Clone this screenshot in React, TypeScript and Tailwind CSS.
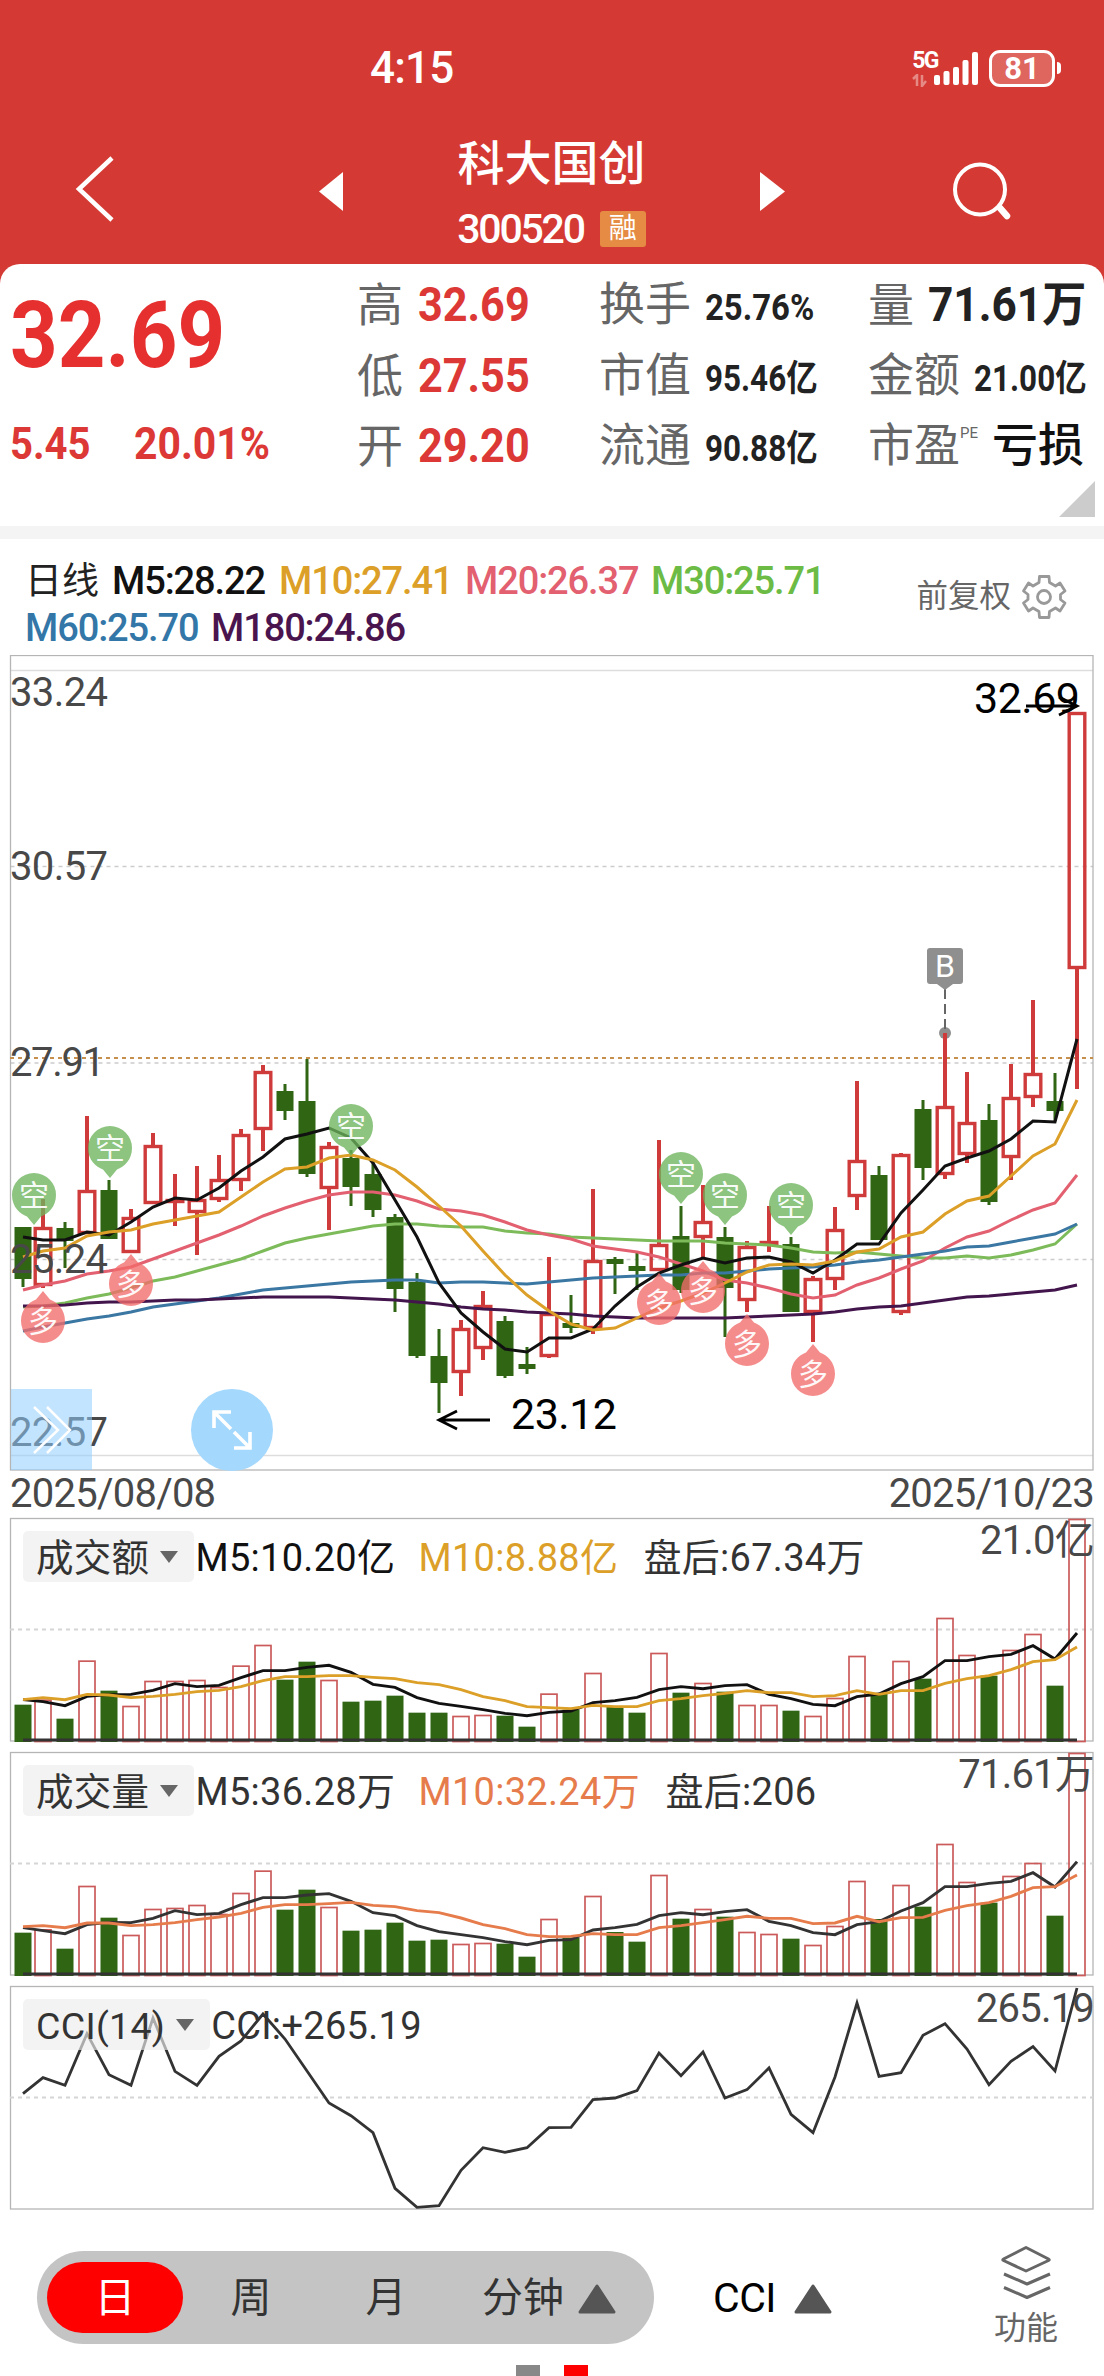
import type { ReactNode } from 'react'

type Candle = [high: number, top: number, bottom: number, low: number, up: 0 | 1]

const RED = '#cf3b3b'
const GREEN = '#2f6513'

// Candle geometry in chart units: high, body top, body bottom, low, rising
const candles: Candle[] = [
  [1227, 1227, 1279, 1287, 0], [1199, 1227, 1286, 1288, 1], [1222, 1228, 1241, 1268, 0],
  [1116, 1190, 1234, 1234, 1], [1180, 1190, 1239, 1239, 0], [1209, 1217, 1253, 1253, 1],
  [1133, 1145, 1204, 1204, 1], [1174, 1199, 1203, 1226, 1], [1166, 1199, 1213, 1255, 1],
  [1155, 1179, 1200, 1202, 1], [1129, 1134, 1181, 1191, 1], [1065, 1071, 1130, 1151, 1],
  [1084, 1091, 1111, 1120, 0], [1059, 1101, 1174, 1177, 0], [1142, 1146, 1189, 1230, 1],
  [1150, 1158, 1187, 1206, 0], [1160, 1174, 1210, 1217, 0], [1214, 1217, 1289, 1312, 0],
  [1273, 1282, 1356, 1358, 0], [1329, 1356, 1383, 1413, 0], [1320, 1328, 1373, 1396, 1],
  [1291, 1305, 1349, 1360, 1], [1316, 1321, 1376, 1378, 0], [1347, 1364, 1369, 1374, 0],
  [1257, 1313, 1357, 1358, 1], [1295, 1323, 1328, 1333, 0], [1189, 1260, 1329, 1334, 1],
  [1257, 1259, 1264, 1294, 0], [1251, 1266, 1271, 1290, 0], [1140, 1244, 1271, 1271, 1],
  [1206, 1236, 1290, 1293, 0], [1185, 1221, 1238, 1258, 1], [1227, 1237, 1288, 1337, 0],
  [1241, 1246, 1301, 1312, 1], [1206, 1241, 1245, 1252, 1], [1237, 1244, 1312, 1312, 0],
  [1276, 1278, 1313, 1342, 1], [1207, 1229, 1280, 1290, 1], [1081, 1160, 1197, 1210, 1],
  [1166, 1175, 1240, 1240, 0], [1153, 1154, 1313, 1315, 1], [1100, 1109, 1168, 1180, 0],
  [1033, 1106, 1175, 1179, 1], [1072, 1122, 1155, 1163, 1], [1104, 1120, 1202, 1205, 0],
  [1064, 1097, 1158, 1180, 1], [1000, 1073, 1098, 1107, 1], [1073, 1101, 1111, 1121, 0],
  [712, 712, 969, 1089, 1],
]

const averages = [
  { color: '#7dbb5a', data: [1307, 1306, 1303, 1298, 1294, 1288, 1281, 1277, 1271, 1265, 1259, 1251, 1243, 1238, 1234, 1230, 1226, 1224, 1224, 1226, 1227, 1227, 1231, 1233, 1234, 1237, 1238, 1239, 1240, 1241, 1241, 1241, 1243, 1244, 1245, 1248, 1252, 1253, 1252, 1254, 1256, 1258, 1258, 1256, 1258, 1255, 1250, 1244, 1224] },
  { color: '#e2606f', data: [1290, 1285, 1281, 1274, 1271, 1267, 1259, 1251, 1243, 1235, 1226, 1216, 1208, 1201, 1195, 1192, 1192, 1195, 1201, 1209, 1211, 1215, 1222, 1230, 1235, 1239, 1246, 1249, 1252, 1257, 1264, 1271, 1280, 1283, 1288, 1294, 1298, 1295, 1285, 1278, 1269, 1261, 1248, 1237, 1231, 1220, 1210, 1203, 1175] },
  { color: '#3b77a3', data: [1331, 1327, 1323, 1319, 1316, 1312, 1307, 1304, 1301, 1298, 1294, 1290, 1288, 1286, 1284, 1282, 1281, 1280, 1280, 1283, 1282, 1282, 1283, 1284, 1282, 1280, 1278, 1277, 1276, 1275, 1275, 1273, 1273, 1271, 1269, 1268, 1267, 1265, 1262, 1260, 1257, 1254, 1251, 1247, 1246, 1242, 1238, 1234, 1224] },
  { color: '#43154d', data: [1306, 1306, 1305, 1303, 1302, 1302, 1301, 1300, 1300, 1299, 1298, 1297, 1297, 1297, 1297, 1298, 1299, 1300, 1302, 1304, 1307, 1309, 1310, 1312, 1313, 1314, 1316, 1317, 1318, 1318, 1318, 1318, 1318, 1317, 1316, 1315, 1314, 1312, 1309, 1307, 1306, 1303, 1300, 1297, 1296, 1294, 1292, 1290, 1285] },
  { color: '#111111', data: [1237, 1240, 1240, 1232, 1235, 1222, 1207, 1198, 1200, 1188, 1171, 1157, 1139, 1134, 1128, 1138, 1163, 1200, 1237, 1283, 1313, 1332, 1349, 1352, 1338, 1338, 1329, 1306, 1287, 1273, 1265, 1258, 1263, 1258, 1257, 1262, 1273, 1260, 1244, 1244, 1213, 1190, 1166, 1158, 1151, 1139, 1121, 1122, 1039] },
  { color: '#dc9f27', data: [1257, 1251, 1248, 1236, 1232, 1230, 1224, 1220, 1216, 1212, 1197, 1182, 1169, 1167, 1158, 1155, 1160, 1170, 1187, 1206, 1226, 1251, 1275, 1295, 1311, 1324, 1330, 1328, 1318, 1308, 1301, 1293, 1283, 1272, 1265, 1264, 1265, 1261, 1252, 1249, 1237, 1232, 1214, 1201, 1196, 1176, 1156, 1144, 1100] },
]

const turnover = {
  bars: [109, 124, 67, 241, 151, 105, 180, 180, 183, 162, 226, 288, 184, 238, 183, 118, 121, 136, 85, 85, 75, 78, 76, 43, 142, 94, 204, 104, 85, 264, 145, 174, 148, 108, 108, 91, 75, 129, 255, 141, 240, 187, 369, 258, 196, 273, 321, 166, 666],
  m5: [124, 118, 106, 134, 139, 140, 152, 172, 163, 167, 190, 211, 211, 221, 227, 206, 170, 161, 130, 113, 104, 94, 83, 76, 86, 90, 115, 121, 131, 154, 163, 157, 166, 169, 140, 127, 110, 106, 133, 141, 172, 193, 241, 241, 253, 260, 286, 246, 324],
  m10: [124, 130, 124, 140, 138, 130, 134, 140, 148, 152, 163, 181, 193, 193, 196, 196, 191, 187, 175, 169, 154, 133, 121, 103, 100, 97, 107, 103, 103, 121, 127, 136, 143, 151, 145, 145, 133, 136, 151, 140, 151, 151, 173, 187, 196, 214, 238, 244, 282],
}

const volume = {
  bars: [127, 137, 79, 267, 172, 120, 198, 201, 210, 183, 246, 313, 196, 256, 204, 133, 136, 157, 103, 106, 93, 96, 94, 55, 168, 112, 237, 129, 100, 300, 169, 198, 175, 129, 123, 109, 90, 147, 282, 168, 270, 205, 393, 279, 217, 297, 336, 178, 666],
  m5: [142, 133, 124, 151, 158, 157, 170, 193, 181, 185, 211, 232, 232, 240, 244, 221, 187, 178, 148, 130, 121, 112, 100, 91, 104, 106, 135, 142, 152, 178, 187, 181, 190, 196, 161, 148, 127, 121, 151, 160, 192, 217, 265, 265, 275, 281, 307, 264, 340],
  m10: [145, 148, 142, 156, 156, 148, 151, 157, 166, 174, 185, 203, 211, 211, 214, 218, 209, 205, 193, 187, 171, 151, 139, 121, 115, 116, 124, 121, 121, 142, 148, 157, 166, 176, 170, 170, 154, 156, 176, 160, 172, 173, 194, 208, 217, 236, 262, 265, 300],
}

const cci = [346, 394, 371, 526, 403, 371, 573, 413, 371, 458, 504, 585, 510, 414, 318, 280, 229, 62, 5, 10, 116, 184, 170, 184, 244, 245, 328, 333, 355, 468, 400, 471, 333, 358, 423, 284, 229, 396, 618, 398, 409, 521, 556, 480, 373, 443, 487, 414, 663]

const shortPins = [[34, 1195], [110, 1148], [351, 1126], [681, 1174], [725, 1195], [791, 1205]]
const longPins = [[43, 1321], [131, 1284], [659, 1303], [703, 1291], [747, 1344], [813, 1374]]

const xAt = (i: number) => (i === 0 ? 23 : 21 + i * 22)
const toPoints = (ys: number[]) => ys.map((y, i) => `${xAt(i)},${y}`).join(' ')
const scaled = (values: number[]) => values.map((v) => 223 - v / 3)

function StatusBar() {
  return (
    <div className="flex h-[136px] items-center justify-between pl-[370px] pr-[43px]">
      <span className="text-[44px] font-medium leading-none tracking-[-0.800px]">4:15</span>
      <div className="flex items-end">
        <div className="flex h-9 flex-col">
          <span className="text-[23px] font-bold leading-[20px] tracking-[-1.500px]">5G</span>
          <svg width="15" height="13" viewBox="0 0 15 13" className="mt-[3px]" stroke="#e58a85" strokeWidth="2.5" fill="none">
            <path d="M1 5l4-4v11M10 1v11l4-5" />
          </svg>
        </div>
        <svg width="48" height="36" viewBox="0 0 48 36" className="-ml-[7px]" fill="#fff">
          <rect x="3" y="24" width="6" height="10" rx="2" />
          <rect x="12.500" y="20" width="6" height="14" rx="2" />
          <rect x="22" y="16" width="6" height="18" rx="2" />
          <rect x="31.500" y="9" width="6" height="25" rx="2" />
          <rect x="41" y="1" width="6" height="33" rx="2" />
        </svg>
        <div className="ml-[10px] flex items-center gap-[2px]">
          <div className="flex h-[37px] w-[66px] items-center justify-center rounded-[11px] border-[3px] border-white bg-[#de665f] text-[31px] font-bold leading-none">
            81
          </div>
          <div className="h-[12px] w-[4px] rounded-r-full bg-white" />
        </div>
      </div>
    </div>
  )
}

function Header() {
  return (
    <header className="h-[284px] bg-[#d43a33] text-white">
      <StatusBar />
      <div className="flex pl-[75px]">
        <svg width="40" height="68" viewBox="0 0 40 68" className="mt-[19px]" fill="none" stroke="#fff" strokeWidth="4.500">
          <path d="M37 3L4 34l33 31" />
        </svg>
        <div className="ml-[204px] flex">
          <svg width="24" height="40" viewBox="0 0 24 40" className="mt-[36px]" fill="#fff">
            <path d="M24 0v39L0 19.500z" />
          </svg>
          <div className="flex w-[417px] flex-col items-center">
            <h1 className="mt-[1px] text-[47px] font-medium leading-[54px]">科大国创</h1>
            <div className="mt-[16px] flex items-center gap-[16px]">
              <span className="text-[41px] font-medium leading-[44px] tracking-[-2.200px]">300520</span>
              <span className="flex h-[36px] w-[46px] items-center justify-center rounded-[3px] bg-[#e58b43] text-[28px] leading-none">
                融
              </span>
            </div>
          </div>
          <svg width="25" height="40" viewBox="0 0 25 40" className="mt-[36px]" fill="#fff">
            <path d="M0 0v39l25-19.500z" />
          </svg>
        </div>
        <svg width="60" height="60" viewBox="0 0 60 60" className="ml-[167px] mt-[26px]" fill="none" stroke="#fff">
          <circle cx="28" cy="27.500" r="25" strokeWidth="4" />
          <path d="M48 46l7 8" strokeWidth="6.500" strokeLinecap="round" />
        </svg>
      </div>
    </header>
  )
}

function Stat({ label, children }: { label: ReactNode; children: ReactNode }) {
  return (
    <div className="flex h-[70.500px] items-baseline">
      <span className="text-[46px] leading-[70px] text-[#666]">{label}</span>
      {children}
    </div>
  )
}

function QuotePanel() {
  const price = 'ml-[15px] inline-block origin-left scale-x-[0.900] text-[48px] font-bold text-[#dc3836]'
  const small = 'ml-[14px] inline-block origin-left scale-x-[0.860] text-[36.500px] font-bold text-[#222]'
  return (
    <section className="relative -mt-5 flex h-[262px] rounded-t-[20px] bg-white pt-[5px]">
      <div className="w-[357px] pl-[10px]">
        <div className="mt-[20px] origin-left scale-x-[0.895] text-[93px] font-bold leading-[93px] text-[#e63030]">32.69</div>
        <div className="mt-[39px] flex text-[44px] font-bold leading-[46px] text-[#dc3836]">
          <span className="w-[124px] origin-left scale-x-[0.910]">5.45</span>
          <span className="origin-left scale-x-[0.930]">20.01%</span>
        </div>
      </div>
      <div className="w-[242px]">
        <Stat label="高"><span className={price}>32.69</span></Stat>
        <Stat label="低"><span className={price}>27.55</span></Stat>
        <Stat label="开"><span className={price}>29.20</span></Stat>
      </div>
      <div className="w-[269px]">
        <Stat label="换手"><span className="ml-[14px] inline-block origin-left scale-x-[0.900] text-[36.500px] font-bold text-[#222]">25.76%</span></Stat>
        <Stat label="市值"><span className={small}>95.46亿</span></Stat>
        <Stat label="流通"><span className={small}>90.88亿</span></Stat>
      </div>
      <div className="w-[236px] whitespace-nowrap">
        <Stat label="量"><span className="ml-[14px] inline-block origin-left scale-x-[0.920] text-[48px] font-bold text-[#222]">71.61万</span></Stat>
        <Stat label="金额"><span className={small}>21.00亿</span></Stat>
        <Stat label={<>市盈<sup className="-top-[23px] text-[15px]">PE</sup></>}>
          <span className="ml-[14px] text-[46px] font-medium text-[#111]">亏损</span>
        </Stat>
      </div>
      <svg width="36" height="36" viewBox="0 0 36 36" className="absolute bottom-[9px] right-[9px]" fill="#ccc">
        <path d="M36 0v36H0z" />
      </svg>
    </section>
  )
}

function GearIcon() {
  return (
    <svg width="46" height="46" viewBox="0 0 46 46" fill="none" stroke="#999" strokeWidth="2.800" strokeLinejoin="round">
      <path d="M18.500 2.500H28L28.500 8.500 34.500 12 39 9 44 17 39.500 20.500V25.500L44 29 39 37 34.500 34 28.500 37.500 28 43.500H18.500L18 37.500 12 34 7.500 37 2.500 29 7 25.500V20.500L2.500 17 7.500 9 12 12 18 8.500z" />
      <circle cx="23" cy="23" r="6.500" />
    </svg>
  )
}

function AverageLegend() {
  return (
    <div className="flex h-[116px] justify-between pl-[25px] pr-[37px] pt-[19px]">
      <div className="text-[38px] font-medium leading-[47px] tracking-[-1.100px]">
        <div className="flex">
          <span className="w-[87px] text-[37px] font-normal tracking-normal text-[#222]">日线</span>
          <span className="w-[167px] text-[#111]">M5:28.22</span>
          <span className="w-[186px] text-[#dc9f27]">M10:27.41</span>
          <span className="w-[186px] text-[#e2606f]">M20:26.37</span>
          <span className="text-[#6cbb45]">M30:25.71</span>
        </div>
        <div className="flex">
          <span className="w-[186px] text-[#3377a8]">M60:25.70</span>
          <span className="text-[#4a154f]">M180:24.86</span>
        </div>
      </div>
      <div className="mt-[16px] flex h-[46px] items-center gap-[10px] text-[31.500px] text-[#666]">
        前复权
        <GearIcon />
      </div>
    </div>
  )
}

function Pin({ x, y, short }: { x: number; y: number; short?: boolean }) {
  return (
    <g transform={`translate(${x} ${y})`}>
      <g fill={short ? '#6db35c' : '#f26b6b'} fillOpacity="0.780">
        <path d={short ? 'M-22 0a22 22 0 1 1 44 0c0 12-8 19-15 21.500L0 30l-7-8.500C-14 19-22 12-22 0z' : 'M-22 0a22 22 0 1 0 44 0c0-12-8-19-15-21.500L0-30l-7 8.500C-14-19-22-12-22 0z'} />
      </g>
      <text y="11" fontSize="30" textAnchor="middle" fill="#fff" fillOpacity="0.950">
        {short ? '空' : '多'}
      </text>
    </g>
  )
}

function PriceChart() {
  return (
    <div className="relative h-[816px]">
      <svg width="1104" height="816" viewBox="0 655 1104 816" className="block">
        <g fill="none" strokeWidth="1.300">
          <path d="M10.500 670.500H1093M10.500 1455.500H1093" stroke="#ddd" />
          <path d="M10.500 866.500H1093M10.500 1063H1093M10.500 1259.500H1093" stroke="#ccc" strokeDasharray="4 4" />
          <rect x="10.500" y="655.500" width="1082.500" height="814.500" stroke="#b5b5b5" />
        </g>
        <path d="M10 1058H1093" stroke="#c68f4c" strokeWidth="2" strokeDasharray="4 4" />

        {candles.map(([high, top, bottom, low, up], i) => {
          const x = xAt(i)
          const color = up ? RED : GREEN
          return (
            <g key={i} stroke={color} fill={up ? 'none' : color}>
              <path d={`M${x} ${high}V${top}M${x} ${bottom}V${low}`} strokeWidth={up ? 4 : 3} />
              {up ? (
                <rect x={x - 7.8} y={top + 1.500} width="15.600" height={Math.max(bottom - top - 3, 0.5)} strokeWidth="3.400" />
              ) : (
                <rect x={x - 8.500} y={top} width="17" height={bottom - top} stroke="none" />
              )}
            </g>
          )
        })}

        {averages.map((line) => (
          <polyline key={line.color} points={toPoints(line.data)} fill="none" stroke={line.color} strokeWidth="3" />
        ))}

        <g fontSize="40" fill="#484848">
          <text x="10" y="706" textLength="98">33.24</text>
          <text x="10" y="880" textLength="98">30.57</text>
          <text x="10" y="1076" textLength="95">27.91</text>
          <text x="10" y="1273" textLength="98">25.24</text>
          <text x="10" y="1446" textLength="98">22.57</text>
        </g>

        <g fontSize="43" fill="#000">
          <text x="974" y="713" textLength="106">32.69</text>
          <text x="511" y="1429" textLength="106">23.12</text>
        </g>
        <g fill="none" stroke="#000" strokeWidth="2.800">
          <path d="M1026 706H1076M1059 697l18 9-18 9" />
          <path d="M490 1420H440M457 1411l-18 9 18 9" />
        </g>

        <circle cx="945" cy="1033" r="6" fill="#8f8f8f" />
        <path d="M945 989V1033" stroke="#666" strokeWidth="2" strokeDasharray="10 5" />
        <path d="M945 1033V1045" stroke={RED} strokeWidth="4" />
        <path d="M930 948h30a3 3 0 0 1 3 3v30a3 3 0 0 1-3 3h-7l-8 6-8-6h-7a3 3 0 0 1-3-3v-30a3 3 0 0 1 3-3z" fill="#8f8f8f" />
        <text x="945" y="977" fontSize="32" textAnchor="middle" fill="#fff">B</text>

        {shortPins.map(([x, y]) => <Pin key={`${x}-${y}`} x={x} y={y} short />)}
        {longPins.map(([x, y]) => <Pin key={`${x}-${y}`} x={x} y={y} />)}
      </svg>

      <button className="absolute bottom-[1px] left-[11px] flex size-[81px] items-center justify-center bg-[#8fceff]/55" aria-label="展开">
        <svg width="42" height="48" viewBox="0 0 42 48" fill="none" stroke="#fff" strokeWidth="2.500">
          <path d="M3 1l24 23L3 47M16 1l23 23-23 23" />
        </svg>
      </button>
      <button className="absolute bottom-0 left-[191px] flex size-[82px] items-center justify-center rounded-full bg-[#a4d8fd]" aria-label="全屏">
        <svg width="40" height="40" viewBox="0 0 40 40" fill="none" stroke="#fff" strokeWidth="3.600">
          <path d="M2 18V2h17M2 2l17 17M38 22v16H22M38 38L22 22" />
        </svg>
      </button>
    </div>
  )
}

function Indicator({ name, max, children, chart }: { name: string; max: string; children: ReactNode; chart: ReactNode }) {
  return (
    <div className="relative mb-[11px] h-[223px]">
      <svg width="1104" height="224" viewBox="0 0 1104 224" className="absolute inset-0 overflow-visible">
        <rect x="10.500" y="0.500" width="1082.500" height="222.500" fill="none" stroke="#b5b5b5" strokeWidth="1.300" />
        <path d="M10 111.500H1093" stroke="#d5d5d5" strokeWidth="2" strokeDasharray="4 4" />
        {chart}
      </svg>
      <div className="relative flex items-start whitespace-nowrap pl-[23px] pr-[10px] text-[38px] tracking-[0.300px]">
        <div className="mt-[13px] flex h-[51px] items-center gap-[11px] rounded-[5px] bg-[#ececec]/65 pl-[13px] pr-[16px] text-[37.500px] text-[#333]">
          <span className="relative top-[2px]">{name}</span>
          <svg width="18" height="12" viewBox="0 0 18 12" fill="#666">
            <path d="M0 0h18L9 12z" />
          </svg>
        </div>
        <div className="ml-[1px] mt-[15px] flex h-[51px] items-center">{children}</div>
        <div className="ml-auto text-[40px] leading-[46px] tracking-[-0.800px] text-[#484848]">{max}</div>
      </div>
    </div>
  )
}

function Bars({ data, m5Color, m10Color }: { data: typeof volume; m5Color: string; m10Color: string }) {
  return (
    <>
      {data.bars.map((v, i) => {
        const up = candles[i][4] === 1
        const h = v / 3
        return up ? (
          <rect key={i} x={xAt(i) - 8} y={223.500 - h} width="16" height={h} fill="none" stroke="#cb5b5b" strokeWidth="1.700" />
        ) : (
          <rect key={i} x={xAt(i) - 8.500} y={223 - h} width="17" height={h + 1} fill={GREEN} />
        )
      })}
      <path d="M23 222H1077" stroke="#333" strokeWidth="2.800" />
      <polyline points={toPoints(scaled(data.m5))} fill="none" stroke={m5Color} strokeWidth="2.900" />
      <polyline points={toPoints(scaled(data.m10))} fill="none" stroke={m10Color} strokeWidth="2.900" />
    </>
  )
}

function UpTriangle() {
  return (
    <svg width="38" height="30" viewBox="0 0 38 30" fill="#555" stroke="#555" strokeWidth="3" strokeLinejoin="round">
      <path d="M19 2l17 26H2z" />
    </svg>
  )
}

function BottomBar() {
  return (
    <footer className="flex h-[115px] pl-[37px] text-[41px]">
      <div className="mt-[1px] flex h-[93px] w-[617px] items-center rounded-full bg-[#c4c4c4] pl-[10px] text-[#333]">
        <div className="flex h-[71px] w-[136px] items-center justify-center rounded-full bg-[#f00] text-white">
          <span className="relative top-[1px]">日</span>
        </div>
        <div className="relative top-[1px] w-[136px] text-center">周</div>
        <div className="relative top-[1px] w-[134px] text-center">月</div>
        <div className="relative top-[1px] ml-[29px] flex items-center gap-[14px]">
          分钟
          <UpTriangle />
        </div>
      </div>
      <div className="ml-[59px] mt-[2px] flex h-[93px] items-center gap-[18px] text-black">
        <span className="tracking-[-0.500px]">CCI</span>
        <UpTriangle />
      </div>
      <div className="ml-auto mr-[46px] flex flex-col items-center text-[32px] leading-[40px] text-[#666]">
        <svg width="50" height="54" viewBox="0 0 50 54" className="-mt-[5px]" fill="none" stroke="#666" strokeWidth="3" strokeLinejoin="round">
          <path d="M25 2.500l22.500 11.500c1 .5 1 1 0 1.500L25 26 2.500 15.500c-1-.5-1-1 0-1.500zM3 29l23 10 23-10M3 42.500l23 10 23-10" />
        </svg>
        <span className="mt-[9px]">功能</span>
      </div>
    </footer>
  )
}

export default function App() {
  return (
    <div className="h-[2376px] w-[1104px] overflow-hidden bg-white font-[Roboto,'Noto_Sans_CJK_SC',sans-serif]">
      <Header />
      <QuotePanel />
      <div className="h-[13px] bg-[#f4f4f4]" />
      <AverageLegend />
      <PriceChart />
      <div className="flex h-[47px] justify-between pl-[10px] pr-[10px] text-[40px] leading-[45px] tracking-[-0.750px] text-[#484848]">
        <span>2025/08/08</span>
        <span>2025/10/23</span>
      </div>

      <Indicator name="成交额" max="21.0亿" chart={<Bars data={turnover} m5Color="#111" m10Color="#dc9f27" />}>
        <span className="w-[223px] text-[#111]">M5:10.20亿</span>
        <span className="w-[225px] text-[#dc9f27]">M10:8.88亿</span>
        <span className="text-[#333]">盘后:67.34万</span>
      </Indicator>
      <Indicator name="成交量" max="71.61万" chart={<Bars data={volume} m5Color="#333" m10Color="#e67c4b" />}>
        <span className="w-[223px] text-[#333]">M5:36.28万</span>
        <span className="w-[247px] text-[#e67c4b]">M10:32.24万</span>
        <span className="text-[#333]">盘后:206</span>
      </Indicator>
      <Indicator
        name="CCI(14)"
        max="265.19"
        chart={<polyline points={toPoints(scaled(cci))} fill="none" stroke="#333" strokeWidth="2.800" />}
      >
        <span className="text-[#333]">CCI:+265.19</span>
      </Indicator>

      <div className="h-[30px]" />
      <BottomBar />
      <div className="flex justify-center gap-[24px]">
        <div className="size-6 bg-[#888]" />
        <div className="size-6 bg-[#f00]" />
      </div>
    </div>
  )
}
